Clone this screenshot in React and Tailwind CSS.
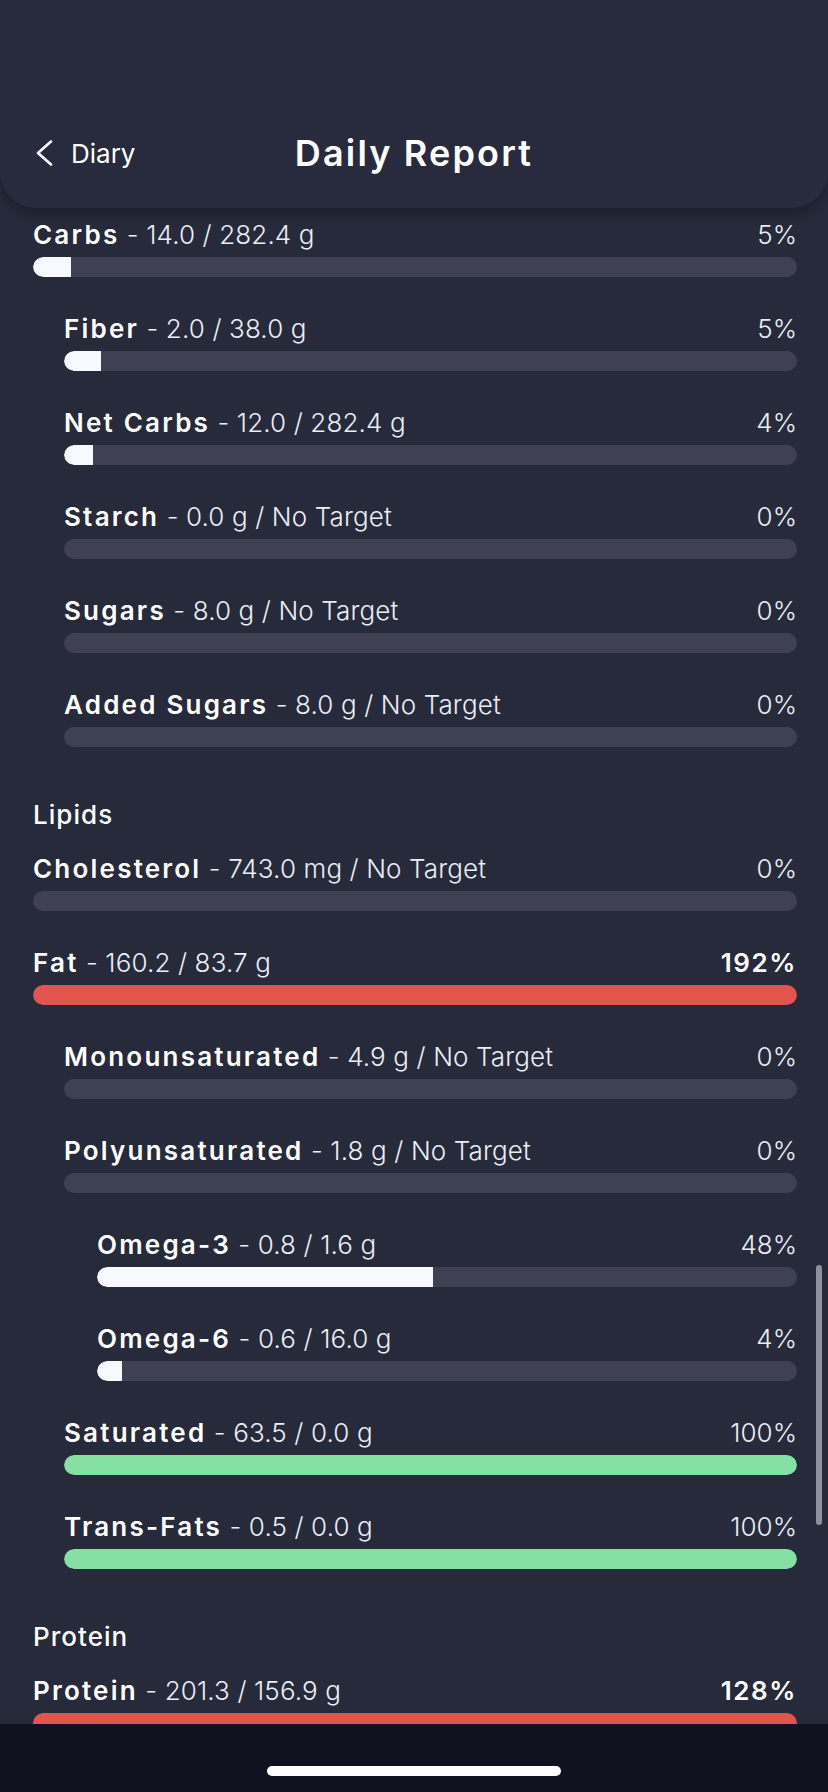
import React from "react";

const groups = [
  {
    title: null,
    rows: [
      { name: "Carbs", value: "14.0 / 282.4 g", pct: 5, level: 0 },
      { name: "Fiber", value: "2.0 / 38.0 g", pct: 5, level: 1 },
      { name: "Net Carbs", value: "12.0 / 282.4 g", pct: 4, level: 1 },
      { name: "Starch", value: "0.0 g / No Target", pct: 0, level: 1 },
      { name: "Sugars", value: "8.0 g / No Target", pct: 0, level: 1 },
      { name: "Added Sugars", value: "8.0 g / No Target", pct: 0, level: 1 },
    ],
  },
  {
    title: "Lipids",
    rows: [
      { name: "Cholesterol", value: "743.0 mg / No Target", pct: 0, level: 0 },
      { name: "Fat", value: "160.2 / 83.7 g", pct: 192, level: 0, tone: "over" },
      { name: "Monounsaturated", value: "4.9 g / No Target", pct: 0, level: 1 },
      { name: "Polyunsaturated", value: "1.8 g / No Target", pct: 0, level: 1 },
      { name: "Omega-3", value: "0.8 / 1.6 g", pct: 48, level: 2 },
      { name: "Omega-6", value: "0.6 / 16.0 g", pct: 3.5, level: 2 },
      { name: "Saturated", value: "63.5 / 0.0 g", pct: 100, level: 1, tone: "good" },
      { name: "Trans-Fats", value: "0.5 / 0.0 g", pct: 100, level: 1, tone: "good" },
    ],
  },
  {
    title: "Protein",
    rows: [{ name: "Protein", value: "201.3 / 156.9 g", pct: 128, level: 0, tone: "over" }],
  },
];

const indent = ["pl-0", "pl-[31px]", "pl-[64px]"];

function NutrientRow({ row }) {
  const fill =
    row.tone === "over" ? (
      <div className="h-full w-full rounded-full bg-[#e2544d]" />
    ) : row.tone === "good" ? (
      <div className="h-full w-full rounded-full bg-[#86e0a4]" />
    ) : row.pct > 0 ? (
      <div className="h-full rounded-l-full bg-[#f8f9ff]" style={{ width: `${row.pct}%` }} />
    ) : null;

  return (
    <div className={indent[row.level]}>
      <div className="flex h-[30px] items-center justify-between leading-[30px]">
        <div className="whitespace-nowrap">
          <span className="font-semibold tracking-[0.085em] text-white">{row.name}</span>
          <span className="font-light tracking-[0.005em] text-[#eceef5]"> - {row.value}</span>
        </div>
        <span className={row.pct > 100 ? "font-semibold tracking-[0.06em] text-white" : "font-light text-[#eceef5]"}>
          {Math.round(row.pct)}%
        </span>
      </div>
      <div className="mt-[7px] h-[20px] w-full overflow-hidden rounded-full bg-[#3f4152]">{fill}</div>
    </div>
  );
}

export default function App() {
  return (
    <div
      className="relative flex h-[1792px] w-[828px] flex-col overflow-hidden bg-[#262a3b] text-[26px] text-white"
      style={{ fontFamily: "Inter, 'Noto Sans', sans-serif" }}
    >
      <header className="relative z-10 grid h-[208px] shrink-0 grid-cols-[1fr_auto_1fr] items-end rounded-b-[36px] bg-[#282b3d] px-[33px] pb-[35px] shadow-[0_6px_14px_rgba(0,0,0,0.28)]">
        <div className="flex h-[40px] items-center gap-[16px]">
          <svg width="22" height="26" viewBox="0 0 22 26" fill="none" stroke="white" strokeWidth="2.6" strokeLinecap="round" strokeLinejoin="round">
            <path d="M18 1.5 L5 13 L18 24.5" />
          </svg>
          <span className="font-normal">Diary</span>
        </div>
        <h1 className="flex h-[40px] items-center text-[36px] font-semibold tracking-[0.06em]">Daily Report</h1>
        <div />
      </header>

      <main className="flex min-h-0 flex-1 flex-col overflow-hidden pl-[33px] pr-[31px] pt-[12px]">
        {groups.map((g, gi) => (
          <section key={gi} className={gi === 0 ? "" : "mt-[53px]"}>
            {g.title && (
              <h2 className="mb-[24px] h-[30px] font-medium leading-[30px] tracking-[0.04em]">{g.title}</h2>
            )}
            <div className="flex flex-col gap-[37px]">
              {g.rows.map((r) => (
                <NutrientRow key={r.name} row={r} />
              ))}
            </div>
          </section>
        ))}
      </main>

      <div className="flex h-[68px] shrink-0 items-start justify-center bg-[#11121f] pt-[42px]">
        <div className="h-[10px] w-[294px] rounded-full bg-white" />
      </div>

      <div className="absolute left-[816px] top-[1265px] h-[260px] w-[6px] rounded-full bg-[#8e909c]" />
    </div>
  );
}
